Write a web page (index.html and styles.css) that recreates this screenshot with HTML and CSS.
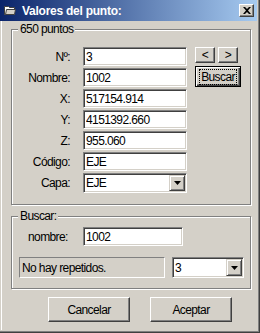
FILE: index.html
```html
<!DOCTYPE html>
<html lang="es">
<head>
    <meta charset="UTF-8">
    <title>Valores del punto</title>
    <link rel="stylesheet" href="styles.css">
</head>
<body>
    <div class="window">
        <div class="titlebar">
            <svg class="title-icon" width="12" height="11" viewBox="0 0 12 11">
                <path d="M0.5 1.5 H4.5 L5.5 2.5 H10.5 V9.5 H0.5 Z" fill="#fff" stroke="#404040"/>
                <path d="M2.5 4.5 H11.5 L10.5 9.5 H1.5 Z" fill="#d4d0c8" stroke="#404040"/>
            </svg>
            <span class="title">Valores del punto:</span>
            <div class="close">
                <svg width="8" height="7" viewBox="0 0 8 7">
                    <path d="M0 0 H2 L4 2 L6 0 H8 L5 3.5 L8 7 H6 L4 5 L2 7 H0 L3 3.5 Z" fill="#000"/>
                </svg>
            </div>
        </div>

        <div class="content">
            <div class="group group-points">
                <div class="group-title">650 puntos</div>
                <div class="fields">
                    <label>Nº:</label>
                    <input class="edit" type="text" value="3">
                    <div class="nav">
                        <button class="btn small">&lt;</button>
                        <button class="btn small">&gt;</button>
                    </div>

                    <label>Nombre:</label>
                    <input class="edit" type="text" value="1002">
                    <button class="btn default"><span class="focus">Buscar</span></button>

                    <label>X:</label>
                    <input class="edit" type="text" value="517154.914">
                    <span></span>

                    <label>Y:</label>
                    <input class="edit" type="text" value="4151392.660">
                    <span></span>

                    <label>Z:</label>
                    <input class="edit" type="text" value="955.060">
                    <span></span>

                    <label>Código:</label>
                    <input class="edit" type="text" value="EJE">
                    <span></span>

                    <label>Capa:</label>
                    <div class="combo">
                        <span class="combo-text">EJE</span>
                        <div class="arrow"><svg width="7" height="4" viewBox="0 0 7 4"><path d="M0 0 H7 L3.5 4 Z" fill="#000"/></svg></div>
                    </div>
                    <span></span>
                </div>
            </div>

            <div class="group group-search">
                <div class="group-title">Buscar:</div>
                <div class="search-row">
                    <label>nombre:</label>
                    <input class="edit search-edit" type="text" value="1002">
                </div>
                <div class="status-row">
                    <div class="status">No hay repetidos.</div>
                    <div class="combo combo-small">
                        <span class="combo-text">3</span>
                        <div class="arrow"><svg width="7" height="4" viewBox="0 0 7 4"><path d="M0 0 H7 L3.5 4 Z" fill="#000"/></svg></div>
                    </div>
                </div>
            </div>

            <div class="actions">
                <button class="btn action">Cancelar</button>
                <button class="btn action">Aceptar</button>
            </div>
        </div>
    </div>
</body>
</html>
```

FILE: styles.css
```css
* {
    box-sizing: border-box;
    margin: 0;
    padding: 0;
}

body {
    font-family: "Liberation Sans", Arial, sans-serif;
    font-size: 12px;
    letter-spacing: -0.6px;
    color: #000;
    background-color: #d4d0c8;
}

.window {
    width: 260px;
    height: 333px;
    display: flex;
    flex-direction: column;
    background-color: #d4d0c8;
    border-right: 1px solid #404040;
    border-bottom: 1px solid #404040;
    box-shadow: inset -1px -1px #808080;
    padding: 0 2px 2px 0;
}

.titlebar {
    height: 21px;
    display: flex;
    align-items: center;
    padding-left: 4px;
    background: linear-gradient(to right, #0a246a, #a6caf0);
    color: white;
    font-weight: bold;
}

.title-icon {
    margin-right: 6px;
}

.title {
    flex: 1;
    letter-spacing: -0.25px;
}

.close {
    width: 15px;
    height: 13px;
    margin-right: 3px;
    display: flex;
    align-items: center;
    justify-content: center;
    background-color: #d4d0c8;
    border: 1px solid;
    border-color: #fff #404040 #404040 #fff;
    box-shadow: inset -1px -1px #808080;
}

.content {
    flex: 1;
    border-left: 1px solid #d4d0c8;
    box-shadow: inset 1px 0 #fff;
}

.group {
    margin-left: 10px;
    width: 240px;
    border: 1px solid #808080;
    box-shadow: inset 1px 1px #fff, 1px 1px #fff;
}

.group-points {
    margin-top: 8px;
    padding-bottom: 12px;
}

.group-search {
    margin-top: 11px;
    padding-bottom: 10px;
}

.group-title {
    width: max-content;
    margin: -8px 0 0 6px;
    padding: 0 2px;
    line-height: 14px;
    background-color: #d4d0c8;
}

.fields {
    display: grid;
    grid-template-columns: 71px 112px auto;
    grid-auto-rows: 19px;
    row-gap: 2px;
    margin-top: 11px;
}

.fields label {
    display: flex;
    align-items: center;
    justify-content: flex-end;
    padding-right: 13px;
}

.edit {
    width: 104px;
    height: 19px;
    padding: 0 2px;
    font: inherit;
    letter-spacing: inherit;
    color: #000;
    background-color: white;
    border: 1px solid;
    border-color: #808080 #fff #fff #808080;
    box-shadow: inset 1px 1px #404040, inset -1px -1px #d4d0c8;
    outline: none;
}

.combo {
    width: 104px;
    height: 20px;
    display: flex;
    align-items: center;
    padding: 1px;
    background-color: white;
    border: 1px solid;
    border-color: #808080 #fff #fff #808080;
    box-shadow: inset 1px 1px #404040, inset -1px -1px #d4d0c8;
}

.combo-text {
    flex: 1;
    padding-left: 1px;
}

.arrow {
    width: 16px;
    height: 100%;
    display: flex;
    align-items: center;
    justify-content: center;
    background-color: #d4d0c8;
    border: 1px solid;
    border-color: #d4d0c8 #404040 #404040 #d4d0c8;
    box-shadow: inset 1px 1px #fff, inset -1px -1px #808080;
}

.btn {
    font: inherit;
    letter-spacing: inherit;
    color: #000;
    background-color: #d4d0c8;
    border: 1px solid;
    border-color: #fff #404040 #404040 #fff;
    box-shadow: inset -1px -1px #808080;
    cursor: pointer;
}

.nav {
    display: flex;
    gap: 3px;
    margin-left: 0;
}

.btn.small {
    width: 20px;
    height: 16px;
    line-height: 12px;
}

.btn.default {
    width: 46px;
    height: 21px;
    margin-top: -2px;
    border: 1px solid #000;
    box-shadow: inset 1px 1px #fff, inset -1px -1px #404040, inset -2px -2px #808080;
}

.focus {
    outline: 1px dotted #000;
    outline-offset: 0;
    padding: 0 1px;
}

.search-row {
    display: flex;
    align-items: center;
    margin-top: 4px;
    padding-left: 16px;
}

.search-row label {
    width: 55px;
}

.search-edit {
    width: 100px;
}

.status-row {
    display: flex;
    gap: 7px;
    margin-top: 11px;
    padding-left: 7px;
}

.status {
    width: 146px;
    height: 21px;
    display: flex;
    align-items: center;
    padding-left: 2px;
    border: 1px solid;
    border-color: #808080 #fff #fff #808080;
}

.combo-small {
    width: 72px;
    height: 21px;
}

.actions {
    display: flex;
    gap: 20px;
    margin-top: 8px;
    padding-left: 47px;
}

.btn.action {
    width: 82px;
    height: 25px;
    box-shadow: inset -1px -1px #808080, inset 1px 1px #d4d0c8;
}
```
